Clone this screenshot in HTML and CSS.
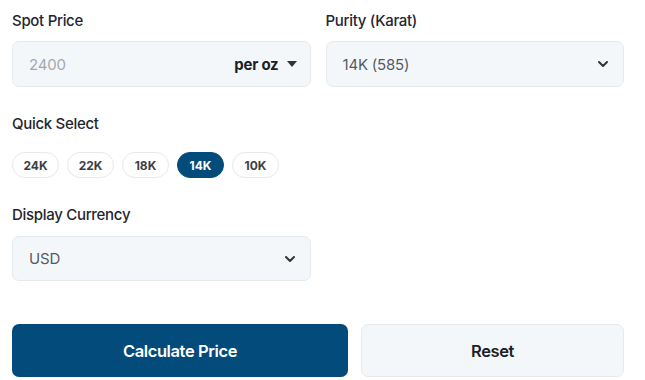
FILE: index.html
```html
<!DOCTYPE html>
<html>
<head>
<meta charset="utf-8">
<link rel="stylesheet" href="styles.css">
</head>
<body>
<div class="form">
  <div class="row">
    <div class="field">
      <div class="label">Spot Price</div>
      <div class="input">
        <span class="placeholder">2400</span>
        <span class="unit">per oz <svg class="caret" width="10" height="6" viewBox="0 0 10 6"><path d="M0 0h10L5 6z" fill="#333"/></svg></span>
      </div>
    </div>
    <div class="field">
      <div class="label">Purity (Karat)</div>
      <div class="input">
        <span class="value">14K (585)</span>
        <svg class="chev" width="12" height="8" viewBox="0 0 12 8"><path d="M2 2l4 4 4-4" fill="none" stroke="#333" stroke-width="2" stroke-linecap="round" stroke-linejoin="round"/></svg>
      </div>
    </div>
  </div>

  <div class="label qs">Quick Select</div>
  <div class="pills">
    <span class="pill">24K</span>
    <span class="pill">22K</span>
    <span class="pill">18K</span>
    <span class="pill active">14K</span>
    <span class="pill">10K</span>
  </div>

  <div class="label dc">Display Currency</div>
  <div class="row">
    <div class="field">
      <div class="input">
        <span class="value">USD</span>
        <svg class="chev" width="12" height="8" viewBox="0 0 12 8"><path d="M2 2l4 4 4-4" fill="none" stroke="#333" stroke-width="2" stroke-linecap="round" stroke-linejoin="round"/></svg>
      </div>
    </div>
    <div class="field"></div>
  </div>

  <div class="actions">
    <button class="btn primary">Calculate Price</button>
    <button class="btn secondary">Reset</button>
  </div>
</div>
</body>
</html>
```
FILE: styles.css
```css
* { box-sizing: border-box; }
body {
  margin: 0;
  background: #fff;
  font-family: Inter, "Noto Sans", sans-serif;
  color: #1c2430;
}
.form {
  width: 636px;
  padding: 11px 12px 0 12px;
}
.row {
  display: flex;
  gap: 15px;
}
.field {
  flex: 1;
}
.label {
  font-size: 15px;
  line-height: 20px;
  font-weight: 500;
  letter-spacing: -0.3px;
  color: #1f2630;
  margin-bottom: 10px;
}
.input {
  height: 46px;
  border: 1px solid #e6eaef;
  border-radius: 7px;
  background: #f4f7fa;
  display: flex;
  align-items: center;
  justify-content: space-between;
  padding: 0 14px 0 16px;
  font-size: 15px;
  letter-spacing: -0.2px;
}
.placeholder { color: #a3a8ae; }
.value { color: #545b64; }
.unit {
  font-weight: 700;
  color: #1c2127;
  display: flex;
  align-items: center;
  gap: 8px;
  margin-right: -1px;
}
.caret { display: block; }
.chev { display: block; }
.qs { margin-top: 27px; margin-bottom: 18px; }
.pills {
  display: flex;
  gap: 8px;
}
.pill {
  width: 47px;
  height: 26px;
  border: 1px solid #e7e9ec;
  border-radius: 13px;
  display: flex;
  align-items: center;
  justify-content: center;
  font-size: 12px;
  font-weight: 700;
  color: #3a3f46;
  background: #fff;
}
.pill.active {
  background: #034b7b;
  border-color: #034b7b;
  color: #fff;
}
.dc { margin-top: 27px; margin-bottom: 11px; }
.dc + .row .input { height: 45px; }
.actions {
  display: flex;
  gap: 13px;
  margin-top: 43px;
}
.btn {
  height: 53px;
  border-radius: 7px;
  font-family: Inter, "Noto Sans", sans-serif;
  font-size: 16.5px;
  font-weight: 600;
  letter-spacing: -0.4px;
}
.primary {
  width: 336px;
  background: #034b7a;
  color: #fff;
  border: none;
}
.secondary {
  width: 263px;
  background: #f4f7fa;
  border: 1px solid #e6eaef;
  color: #1c2127;
}
```
